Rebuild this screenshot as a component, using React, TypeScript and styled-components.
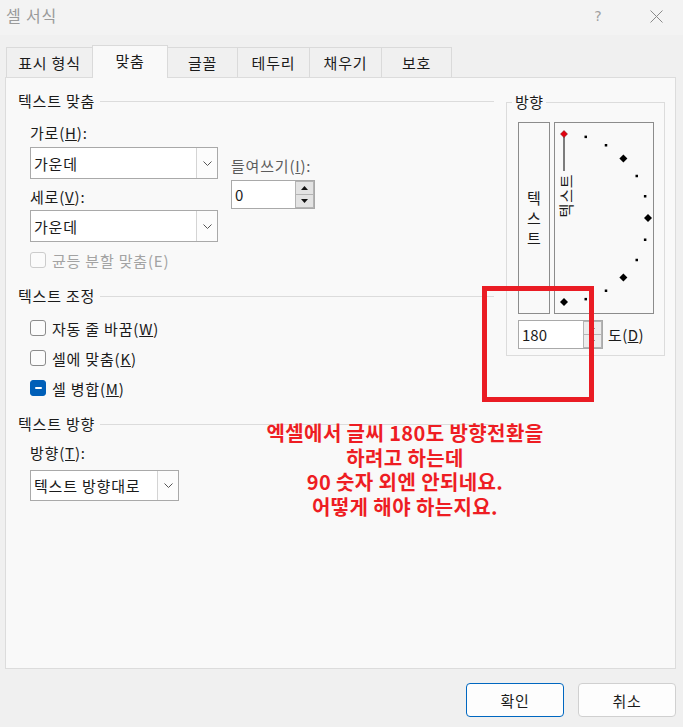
import React from 'react'
import styled, { createGlobalStyle } from 'styled-components'

const GlobalStyle = createGlobalStyle`
  html, body {
    margin: 0;
    padding: 0;
    background: #f0f0f0;
  }
  body {
    font-family: 'Noto Sans CJK KR', 'Noto Sans', sans-serif;
    font-size: 15px;
    letter-spacing: 0.8px;
    color: #1b1b1b;
  }
`

type CheckState = 'off' | 'mixed' | 'disabled'

const TABS = [
  { label: '표시 형식', width: 87 },
  { label: '맞춤', width: 76, active: true },
  { label: '글꼴', width: 71 },
  { label: '테두리', width: 73 },
  { label: '채우기', width: 73 },
  { label: '보호', width: 71 },
]

const Chevron = () => (
  <svg width="9" height="5" viewBox="0 0 9 5">
    <polyline points="0.5,0.5 4.5,4.5 8.5,0.5" fill="none" stroke="#555" strokeWidth="1" />
  </svg>
)

const Arrow = ({ up, w = 7, h = 4 }: { up?: boolean; w?: number; h?: number }) => (
  <svg width={w} height={h} viewBox={`0 0 ${w} ${h}`}>
    <polygon points={up ? `0,${h} ${w / 2},0 ${w},${h}` : `0,0 ${w / 2},${h} ${w},0`} fill="#111" />
  </svg>
)

const Dropdown = (props: { value: string; width: number; height: number; mt?: number }) => (
  <Select $w={props.width} $h={props.height} $mt={props.mt}>
    <SelectValue>{props.value}</SelectValue>
    <SelectButton>
      <Chevron />
    </SelectButton>
  </Select>
)

const SpinBox = (props: { value: string; width: number; mt?: number; small?: boolean }) => (
  <Spinner $w={props.width} $mt={props.mt}>
    <SpinValue>{props.value}</SpinValue>
    <SpinButtons>
      <SpinButton $soft={props.small}>
        {props.small ? <Arrow up w={5} h={2} /> : <Arrow up />}
      </SpinButton>
      <SpinButton $soft={props.small}>
        {props.small ? <Arrow w={5} h={2} /> : <Arrow />}
      </SpinButton>
    </SpinButtons>
  </Spinner>
)

const Check = (props: { state: CheckState; children: React.ReactNode; mt?: number }) => (
  <CheckRow $mt={props.mt} $disabled={props.state === 'disabled'}>
    <Box $state={props.state}>{props.state === 'mixed' && <Dash />}</Box>
    {props.children}
  </CheckRow>
)

const Dial = () => {
  const cx = 9
  const cy = 95
  const r = 84
  const marks = [75, 60, 45, 30, 15, 0, -15, -30, -45, -60, -75, -90]
  return (
    <svg width="98" height="190" viewBox="0 0 98 190">
      {marks.map((deg) => {
        const a = (deg * Math.PI) / 180
        const x = cx + r * Math.cos(a)
        const y = cy - r * Math.sin(a)
        if (deg % 45 === 0) {
          const s = 4
          return (
            <polygon
              key={deg}
              points={`${x},${y - s} ${x + s},${y} ${x},${y + s} ${x - s},${y}`}
              fill="#000"
            />
          )
        }
        return <rect key={deg} x={x - 1.25} y={y - 1.25} width="2.5" height="2.5" fill="#000" />
      })}
      <line x1={cx} y1="14" x2={cx} y2="48" stroke="#000" strokeWidth="1" />
      <polygon points={`${cx},7.5 ${cx + 3.5},11 ${cx},14.5 ${cx - 3.5},11`} fill="#e3000f" stroke="#6b0000" strokeWidth="0.5" />
      <text
        transform="translate(10 72.5) rotate(-90)"
        textAnchor="middle"
        dominantBaseline="central"
        fontSize="15"
        letterSpacing="0.8"
        fontFamily="'Noto Sans CJK KR', sans-serif"
        fill="#1b1b1b"
      >
        텍스트
      </text>
    </svg>
  )
}

const App: React.FC = () => {
  return (
    <>
      <GlobalStyle />
      <Dialog>
        <TitleBar>
          <Title>셀 서식</Title>
          <HelpMark>?</HelpMark>
          <CloseMark>
            <svg width="13" height="13" viewBox="0 0 13 13">
              <path d="M0.5 0.5 L12.5 12.5 M12.5 0.5 L0.5 12.5" stroke="#8a8a8a" strokeWidth="1" />
            </svg>
          </CloseMark>
        </TitleBar>

        <TabStrip>
          {TABS.map((t) => (
            <Tab key={t.label} $w={t.width} $active={t.active}>
              {t.label}
            </Tab>
          ))}
        </TabStrip>

        <Panel>
          <LeftCol>
            <GroupHeader>
              <HeaderText>텍스트 맞춤</HeaderText>
              <HeaderRule />
            </GroupHeader>
            <GroupBody>
              <FieldRow>
                <FieldCol>
                  <FieldLabel>
                    가로(<u>H</u>):
                  </FieldLabel>
                  <Dropdown value="가운데" width={188} height={32} mt={4} />
                  <FieldLabel $mt={8}>
                    세로(<u>V</u>):
                  </FieldLabel>
                  <Dropdown value="가운데" width={188} height={32} mt={3} />
                </FieldCol>
                <IndentCol>
                  <FieldLabel $muted>
                    들여쓰기(<u>I</u>):
                  </FieldLabel>
                  <SpinBox value="0" width={84} mt={4} />
                </IndentCol>
              </FieldRow>
              <Check state="disabled" mt={8}>
                균등 분할 맞춤(E)
              </Check>
            </GroupBody>

            <GroupHeader $mt={16}>
              <HeaderText>텍스트 조정</HeaderText>
              <HeaderRule />
            </GroupHeader>
            <GroupBody>
              <Check state="off" mt={12}>
                자동 줄 바꿈(<u>W</u>)
              </Check>
              <Check state="off" mt={10}>
                셀에 맞춤(<u>K</u>)
              </Check>
              <Check state="mixed" mt={10}>
                셀 병합(<u>M</u>)
              </Check>
            </GroupBody>

            <GroupHeader $mt={16}>
              <HeaderText>텍스트 방향</HeaderText>
              <HeaderRule />
            </GroupHeader>
            <GroupBody>
              <FieldLabel $mt={9}>
                방향(<u>T</u>):
              </FieldLabel>
              <Dropdown value="텍스트 방향대로" width={149} height={31} mt={7} />
            </GroupBody>
          </LeftCol>

          <DirectionGroup>
            <Legend>방향</Legend>
            <OrientRow>
              <VerticalTextBox>
                <span>텍</span>
                <span>스</span>
                <span>트</span>
              </VerticalTextBox>
              <DialBox>
                <Dial />
              </DialBox>
            </OrientRow>
            <DegreeRow>
              <SpinBox value="180" width={85} small />
              <DegreeLabel>
                도(<u>D</u>)
              </DegreeLabel>
            </DegreeRow>
          </DirectionGroup>
        </Panel>

        <Footer>
          <Button $primary>확인</Button>
          <Button>취소</Button>
        </Footer>

        <RedFrame />
        <Annotation>
          엑셀에서 글씨 180도 방향전환을
          <br />
          하려고 하는데
          <br />
          90 숫자 외엔 안되네요.
          <br />
          어떻게 해야 하는지요.
        </Annotation>
      </Dialog>
    </>
  )
}

const Dialog = styled.div`
  position: relative;
  width: 683px;
  height: 727px;
  display: flex;
  flex-direction: column;
  background: #f0f0f0;
  overflow: hidden;
`
const TitleBar = styled.div`
  flex: none;
  height: 35px;
  box-sizing: border-box;
  display: flex;
  align-items: flex-start;
  padding: 5px 12px 0 6px;
  background: #f3f3f3;
`
const Title = styled.div`
  flex: 1;
  font-size: 16px;
  line-height: 20px;
  color: #9a9a9a;
`
const HelpMark = styled.div`
  width: 20px;
  text-align: center;
  font-family: 'DejaVu Sans', sans-serif;
  font-size: 14px;
  letter-spacing: 0;
  line-height: 22px;
  color: #a0a0a0;
`
const CloseMark = styled.div`
  width: 30px;
  height: 22px;
  margin-left: 33px;
  display: flex;
  align-items: center;
  justify-content: center;
`
const TabStrip = styled.div`
  flex: none;
  height: 42px;
  box-sizing: border-box;
  display: flex;
  align-items: flex-end;
  padding-left: 6px;
`
const Tab = styled.div<{ $w: number; $active?: boolean }>`
  position: relative;
  z-index: ${({ $active }) => ($active ? 1 : 0)};
  width: ${({ $w }) => $w}px;
  height: ${({ $active }) => ($active ? 33 : 30)}px;
  margin: 0 -1px ${({ $active }) => ($active ? -1 : 0)}px 0;
  box-sizing: border-box;
  display: flex;
  align-items: center;
  justify-content: center;
  padding-bottom: ${({ $active }) => ($active ? 3 : 0)}px;
  border: 1px solid #dadada;
  border-bottom: none;
  background: ${({ $active }) => ($active ? '#f9f9f9' : '#f0f0f0')};
  color: #1b1b1b;
`
const Panel = styled.div`
  flex: none;
  height: 592px;
  margin: 0 7px 0 5px;
  box-sizing: border-box;
  display: flex;
  align-items: flex-start;
  gap: 12px;
  padding: 13px 10px 0 12px;
  border: 1px solid #dcdcdc;
  background: #f9f9f9;
`
const LeftCol = styled.div`
  width: 476px;
  flex: none;
  display: flex;
  flex-direction: column;
`
const GroupHeader = styled.div<{ $mt?: number }>`
  display: flex;
  align-items: center;
  height: 20px;
  margin-top: ${({ $mt }) => $mt ?? 0}px;
`
const HeaderText = styled.span`
  line-height: 20px;
`
const HeaderRule = styled.span`
  flex: 1;
  height: 1px;
  margin-left: 5px;
  background: #dcdcdc;
`
const GroupBody = styled.div`
  display: flex;
  flex-direction: column;
  padding-left: 12px;
`
const FieldRow = styled.div`
  display: flex;
  margin-top: 12px;
`
const FieldCol = styled.div`
  display: flex;
  flex-direction: column;
`
const IndentCol = styled.div`
  display: flex;
  flex-direction: column;
  margin-left: 13px;
  padding-top: 33px;
`
const FieldLabel = styled.div<{ $mt?: number; $muted?: boolean }>`
  height: 20px;
  line-height: 20px;
  white-space: nowrap;
  margin-top: ${({ $mt }) => $mt ?? 0}px;
  color: ${({ $muted }) => ($muted ? '#5c5c5c' : '#1b1b1b')};
`
const Select = styled.div<{ $w: number; $h: number; $mt?: number }>`
  width: ${({ $w }) => $w}px;
  height: ${({ $h }) => $h}px;
  margin-top: ${({ $mt }) => $mt ?? 0}px;
  box-sizing: border-box;
  display: flex;
  border: 1px solid #a9a9a9;
  background: #fff;
`
const SelectValue = styled.div`
  flex: 1;
  display: flex;
  align-items: center;
  padding-left: 3px;
  white-space: nowrap;
`
const SelectButton = styled.div`
  width: 20px;
  display: flex;
  align-items: center;
  justify-content: center;
  border-left: 1px solid #d4d4d4;
  background: #fcfcfc;
`
const Spinner = styled.div<{ $w: number; $mt?: number }>`
  width: ${({ $w }) => $w}px;
  height: 29px;
  margin-top: ${({ $mt }) => $mt ?? 0}px;
  box-sizing: border-box;
  display: flex;
  border: 1px solid #a9a9a9;
  background: #fff;
`
const SpinValue = styled.div`
  flex: 1;
  display: flex;
  align-items: center;
  padding-left: 3px;
  letter-spacing: 0;
`
const SpinButtons = styled.div`
  width: 19px;
  display: flex;
  flex-direction: column;
`
const SpinButton = styled.div<{ $soft?: boolean }>`
  flex: 1;
  display: flex;
  align-items: center;
  justify-content: center;
  border: 1px solid #b4b4b4;
  margin-top: -1px;
  background: ${({ $soft }) => ($soft ? '#ececec' : '#e3e3e3')};

  &:first-child {
    margin-top: 0;
  }
`
const CheckRow = styled.div<{ $mt?: number; $disabled?: boolean }>`
  display: flex;
  align-items: center;
  height: 20px;
  white-space: nowrap;
  margin-top: ${({ $mt }) => $mt ?? 0}px;
  color: ${({ $disabled }) => ($disabled ? '#a3a3a3' : '#1b1b1b')};
`
const Box = styled.span<{ $state: CheckState }>`
  width: 16px;
  height: 16px;
  flex: none;
  box-sizing: border-box;
  margin-right: 6px;
  display: flex;
  align-items: center;
  justify-content: center;
  border-radius: 3px;
  border: 1px solid
    ${({ $state }) => ($state === 'mixed' ? '#005fb8' : $state === 'disabled' ? '#cccccc' : '#8b8b8b')};
  background: ${({ $state }) => ($state === 'mixed' ? '#005fb8' : '#fbfbfb')};
`
const Dash = styled.span`
  width: 7px;
  height: 2px;
  border-radius: 1px;
  background: #fff;
`
const DirectionGroup = styled.fieldset`
  width: 159px;
  flex: none;
  box-sizing: border-box;
  margin: 1px 0 0;
  padding: 10px 10px 6px 11px;
  min-width: 0;
  border: 1px solid #dcdcdc;
`
const Legend = styled.legend`
  margin-left: -6px;
  padding: 0 3px;
  line-height: 20px;
  letter-spacing: 0.4px;
`
const OrientRow = styled.div`
  display: flex;
  gap: 4px;
  height: 192px;
`
const VerticalTextBox = styled.div`
  width: 32px;
  box-sizing: border-box;
  display: flex;
  flex-direction: column;
  align-items: center;
  justify-content: center;
  line-height: 20px;
  letter-spacing: 0;
  border: 1px solid #8c8c8c;
`
const DialBox = styled.div`
  width: 100px;
  box-sizing: border-box;
  border: 1px solid #8c8c8c;
  line-height: 0;
`
const DegreeRow = styled.div`
  display: flex;
  align-items: center;
  margin-top: 6px;
`
const DegreeLabel = styled.span`
  margin-left: 5px;
  letter-spacing: 0.4px;
`
const Footer = styled.div`
  flex: 1;
  display: flex;
  justify-content: flex-end;
  align-items: flex-start;
  gap: 14px;
  padding: 14px 7px 0 0;
`
const Button = styled.button<{ $primary?: boolean }>`
  width: 98px;
  height: 34px;
  padding: 0;
  border-radius: 4px;
  border: 1px solid ${({ $primary }) => ($primary ? '#0067c0' : '#d0d0d0')};
  background: #fdfdfd;
  font-family: inherit;
  font-size: 15px;
  letter-spacing: 0.8px;
  color: #1b1b1b;
`
const RedFrame = styled.div`
  position: absolute;
  left: 482px;
  top: 286px;
  width: 112px;
  height: 116px;
  box-sizing: border-box;
  border: 5px solid #ea1c24;
  pointer-events: none;
`
const Annotation = styled.div`
  position: absolute;
  left: 405px;
  top: 421px;
  transform: translateX(-50%);
  white-space: nowrap;
  text-align: center;
  font-size: 20px;
  font-weight: 700;
  letter-spacing: 0.4px;
  line-height: 24.5px;
  color: #ee1d23;
`

export default App
